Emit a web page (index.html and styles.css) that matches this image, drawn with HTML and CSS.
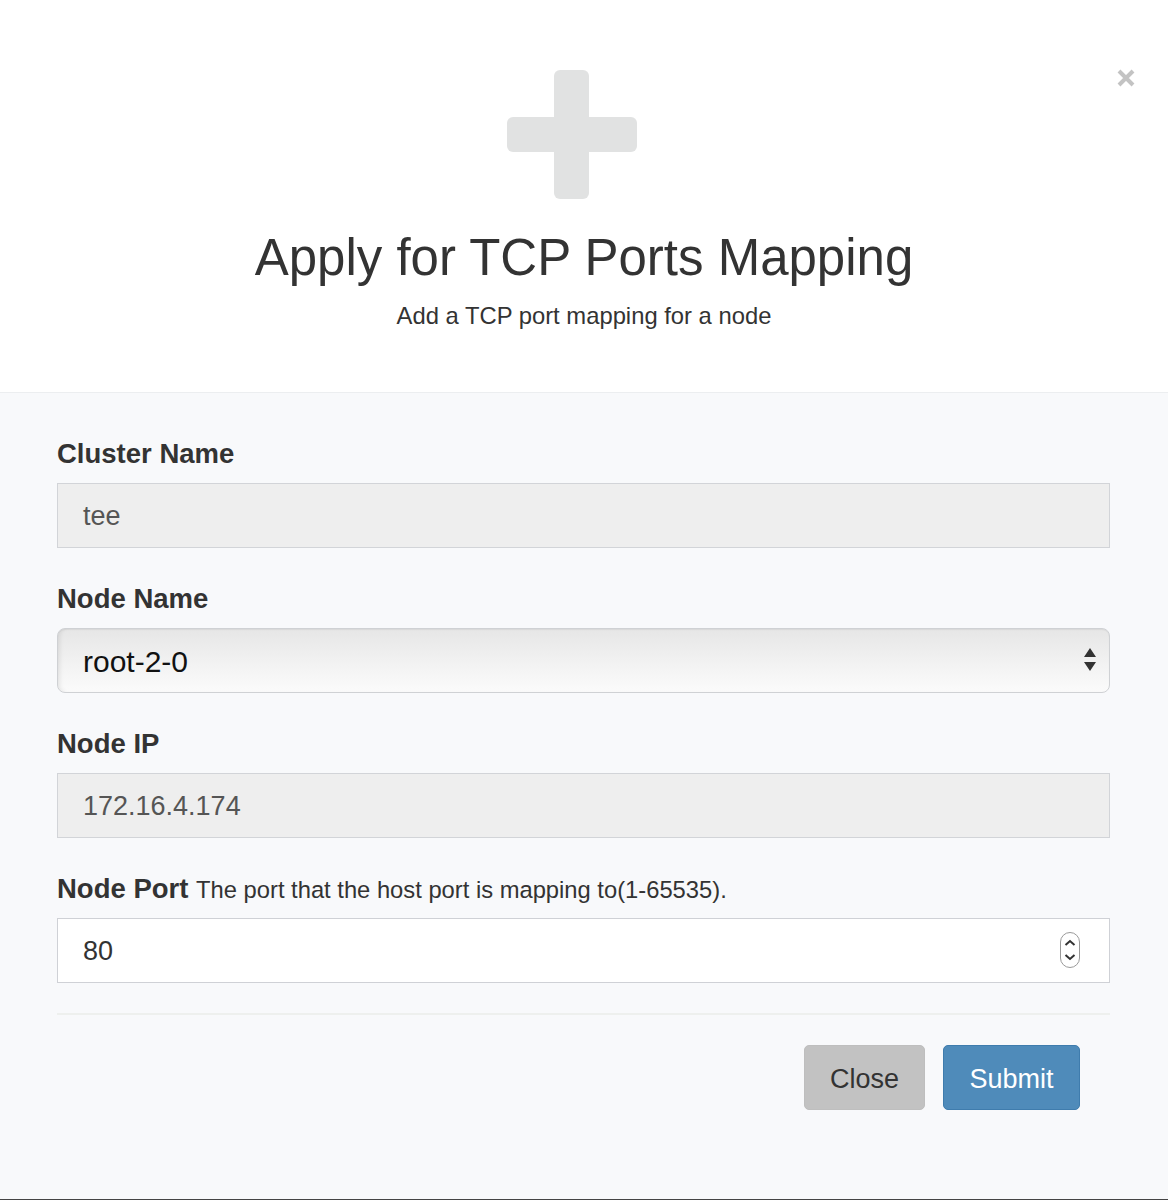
FILE: index.html
```html
<!DOCTYPE html>
<html lang="en">
<head>
<meta charset="utf-8">
<title>Apply for TCP Ports Mapping</title>
<link rel="stylesheet" href="styles.css">
</head>
<body>
<div class="modal">
  <div class="modal-header">
    <button class="close-x" type="button" aria-label="Close">
      <svg width="20" height="20" viewBox="0 0 20 20"><path d="M3 3 L17 17 M17 3 L3 17" stroke="#c3c3c3" stroke-width="4" stroke-linecap="butt"/></svg>
    </button>
    <svg class="plus-icon" width="130" height="130" viewBox="0 0 130 130">
      <rect x="47" y="0" width="35" height="129" rx="6" fill="#e1e2e2"/>
      <rect x="0" y="47" width="130" height="35" rx="6" fill="#e1e2e2"/>
    </svg>
    <h1 class="title">Apply for TCP Ports Mapping</h1>
    <p class="subtitle">Add a TCP port mapping for a node</p>
  </div>
  <div class="modal-body">
    <div class="field">
      <label class="label">Cluster Name</label>
      <div class="control control-disabled">tee</div>
    </div>
    <div class="field">
      <label class="label">Node Name</label>
      <div class="select-wrap">
        <div class="control control-select">root-2-0</div>
        <svg class="select-arrows" width="14" height="26" viewBox="0 0 14 26"><path d="M7 1 L13 10 L1 10 Z M1 15 L13 15 L7 24 Z" fill="#333"/></svg>
      </div>
    </div>
    <div class="field">
      <label class="label">Node IP</label>
      <div class="control control-disabled">172.16.4.174</div>
    </div>
    <div class="field">
      <label class="label">Node Port <span class="help">The port that the host port is mapping to(1-65535).</span></label>
      <div class="select-wrap">
        <div class="control control-number">80</div>
        <svg class="spinner" width="20" height="36" viewBox="0 0 20 36"><rect x="0.5" y="0.5" width="19" height="35" rx="9.5" fill="#fff" stroke="#9a9a9a"/><path d="M5.5 13 L10 9 L14.5 13 M5.5 23 L10 27 L14.5 23" fill="none" stroke="#333" stroke-width="2"/></svg>
      </div>
    </div>
    <div class="divider"></div>
    <div class="footer">
      <button class="btn btn-default" type="button">Close</button>
      <button class="btn btn-primary" type="button">Submit</button>
    </div>
  </div>
</div>
</body>
</html>
```
FILE: styles.css
```css
* { box-sizing: border-box; }
html, body { margin: 0; padding: 0; }
body {
  font-family: "Liberation Sans", Arial, sans-serif;
  color: #333;
  background: #f8f9fb;
  width: 1168px;
  height: 1200px;
  overflow: hidden;
}
.modal {
  height: 1200px;
  border-bottom: 1px solid #444;
  background: #f8f9fb;
}
.modal-header {
  position: relative;
  height: 393px;
  background: #fff;
  border-bottom: 1px solid #eceef0;
  display: flex;
  flex-direction: column;
  align-items: center;
  padding-top: 70px;
}
.close-x {
  position: absolute;
  top: 68px;
  right: 32px;
  width: 20px;
  height: 20px;
  padding: 0;
  border: 0;
  background: none;
}
.close-x svg { display: block; }
.plus-icon { display: block; margin-left: -25px; }
.title {
  margin: 28px 0 0 0;
  font-size: 51px;
  line-height: 60px;
  font-weight: 400;
  color: #333;
}
.subtitle {
  margin: 13px 0 0 0;
  font-size: 23.8px;
  line-height: 30px;
  color: #333;
}
.modal-body {
  padding: 42px 58px 0 57px;
}
.field { margin-bottom: 32px; }
.label {
  display: block;
  height: 36px;
  font-size: 27.5px;
  line-height: 38px;
  font-weight: 700;
  color: #333;
  margin-bottom: 12px;
}
.help {
  font-weight: 400;
  font-size: 23.75px;
  line-height: 1;
}
.control {
  display: block;
  width: 100%;
  height: 65px;
  padding: 2px 25px 0;
  font-family: "Liberation Sans", Arial, sans-serif;
  font-size: 27px;
  line-height: 61px;
  color: #555;
  border: 1px solid #d2d4d8;
  border-radius: 0;
}
.control-disabled { background: #eeeeee; }
.select-wrap { position: relative; }
.control-select {
  color: #111;
  font-size: 30px;
  border-radius: 8px;
  border-color: #cfd1d4;
  background: linear-gradient(#e6e6e6, #f2f2f2 55%, #fbfbfb);
  box-shadow: inset 4px 0 4px -2px rgba(0,0,0,0.08), inset 0 1px 1px rgba(0,0,0,0.05);
}
.select-arrows {
  position: absolute;
  right: 13px;
  top: 19px;
}
.control-number {
  background: #fff;
  color: #333;
  border-color: #cfd1d6;
}
.spinner {
  position: absolute;
  right: 30px;
  top: 14px;
}
.divider {
  height: 2px;
  background: #eef0ee;
  margin-top: -2px;
}
.footer {
  display: flex;
  justify-content: flex-end;
  gap: 18px;
  padding: 30px 30px 0 0;
}
.btn {
  height: 65px;
  padding: 3px 25px 0;
  font-family: "Liberation Sans", Arial, sans-serif;
  font-size: 27px;
  border-radius: 5px;
  border: 1px solid transparent;
}
.btn-default {
  width: 121px;
  background: #c2c2c2;
  border-color: #bebebe;
  color: #333;
}
.btn-primary {
  width: 137px;
  background: #4f8bba;
  border-color: #3f7cad;
  color: #fff;
}
```
